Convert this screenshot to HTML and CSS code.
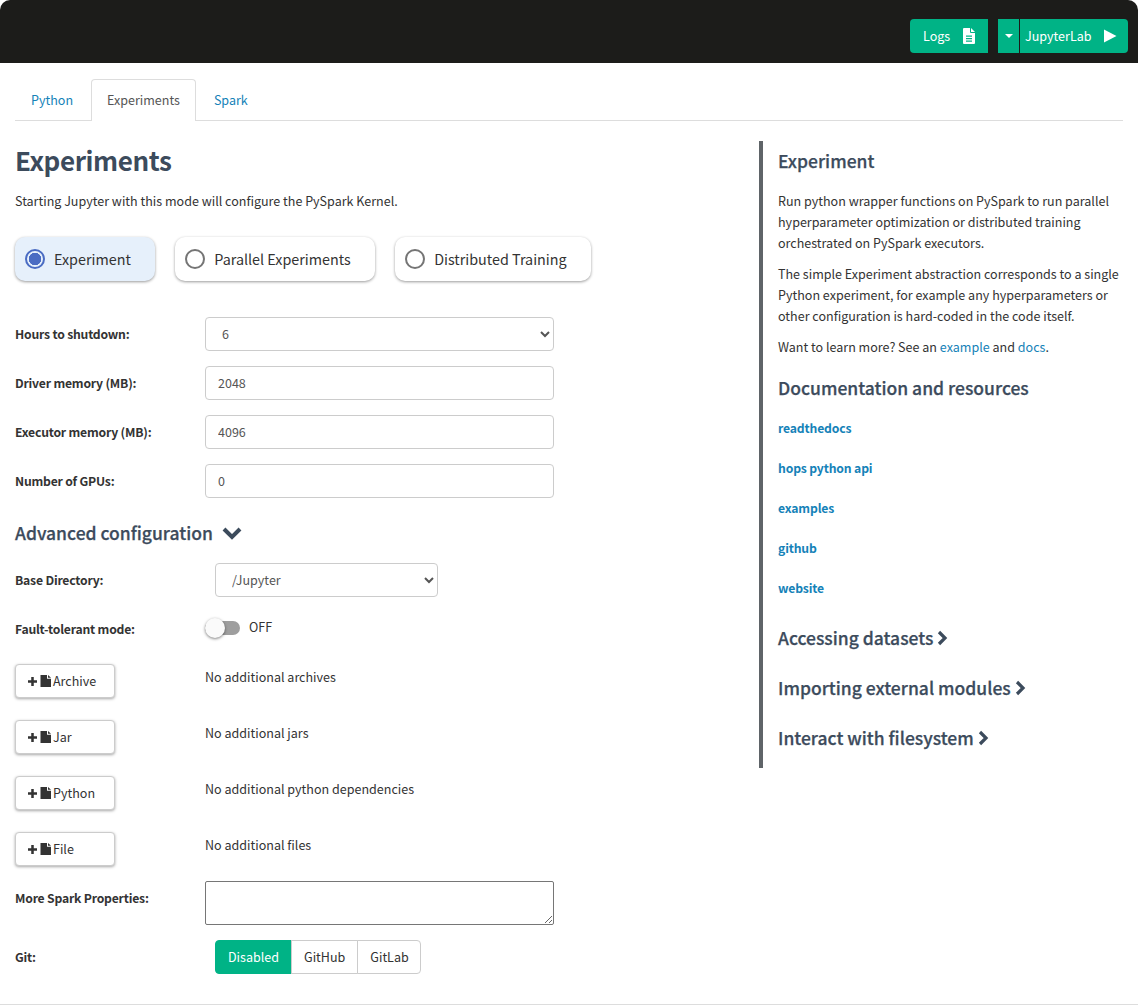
FILE: index.html
```html
<!DOCTYPE html>
<html lang="en">
  <head>
    <meta charset="UTF-8" />
    <title>Jupyter</title>
    <link rel="stylesheet" href="styles.css">
  </head>
  <body>
    <header class="topBar">
      <button class="greenBtn logsBtn">
        Logs
        <svg class="btnIcon" width="12" height="16" viewBox="0 0 12 16"><path fill="currentColor" fill-rule="evenodd" d="M0 1a1 1 0 0 1 1-1h6v4a1 1 0 0 0 1 1h4v10a1 1 0 0 1-1 1H1a1 1 0 0 1-1-1zM8 0l4 4H8zM3 7.5v1.2h6V7.5zM3 10v1.2h6V10zM3 12.5v1.2h6v-1.2z"/></svg>
      </button>
      <div class="splitBtn">
        <button class="greenBtn caretBtn"><span class="caret"></span></button>
        <button class="greenBtn startBtn">
          JupyterLab
          <svg class="btnIcon" width="13" height="14" viewBox="0 0 13 14"><path fill="currentColor" d="M0 0.5 12.5 7 0 13.5z"/></svg>
        </button>
      </div>
    </header>

    <main>
      <ul class="tabs">
        <li><a href="#">Python</a></li>
        <li class="active"><a href="#">Experiments</a></li>
        <li><a href="#">Spark</a></li>
      </ul>

      <div class="content">
        <section class="formCol">
          <h1>Experiments</h1>
          <p class="intro">Starting Jupyter with this mode will configure the PySpark Kernel.</p>

          <div class="modes">
            <label class="modeCard selected"><span class="radio"></span>Experiment</label>
            <label class="modeCard"><span class="radio"></span>Parallel Experiments</label>
            <label class="modeCard"><span class="radio"></span>Distributed Training</label>
          </div>

          <div class="fieldRow">
            <label>Hours to shutdown:</label>
            <select class="field"><option>6</option></select>
          </div>
          <div class="fieldRow">
            <label>Driver memory (MB):</label>
            <input class="field" type="text" value="2048" />
          </div>
          <div class="fieldRow">
            <label>Executor memory (MB):</label>
            <input class="field" type="text" value="4096" />
          </div>
          <div class="fieldRow">
            <label>Number of GPUs:</label>
            <input class="field" type="text" value="0" />
          </div>

          <h2 class="advanced">
            Advanced configuration
            <svg width="20" height="14" viewBox="0 0 20 14"><path fill="none" stroke="currentColor" stroke-width="4" d="M2 3l8 8 8-8"/></svg>
          </h2>

          <div class="fieldRow baseDir">
            <label>Base Directory:</label>
            <select class="field"><option>/Jupyter</option></select>
          </div>
          <div class="fieldRow toggleRow">
            <label>Fault-tolerant mode:</label>
            <span class="toggle"><span class="knob"></span></span>
            <span class="toggleText">OFF</span>
          </div>

          <div class="fileRow">
            <button class="addBtn"><svg class="plusIcon" width="9" height="9" viewBox="0 0 10 10"><path fill="currentColor" d="M3.6 0h2.8v3.6H10v2.8H6.4V10H3.6V6.4H0V3.6h3.6z"/></svg><svg width="11" height="12" viewBox="0 0 11 12"><path fill="currentColor" d="M0.500 0H7v3.800h4V12H0.500zM8 0l3 2.800H8z"/></svg>Archive</button>
            <span>No additional archives</span>
          </div>
          <div class="fileRow">
            <button class="addBtn"><svg class="plusIcon" width="9" height="9" viewBox="0 0 10 10"><path fill="currentColor" d="M3.6 0h2.8v3.6H10v2.8H6.4V10H3.6V6.4H0V3.6h3.6z"/></svg><svg width="11" height="12" viewBox="0 0 11 12"><path fill="currentColor" d="M0.500 0H7v3.800h4V12H0.500zM8 0l3 2.800H8z"/></svg>Jar</button>
            <span>No additional jars</span>
          </div>
          <div class="fileRow">
            <button class="addBtn"><svg class="plusIcon" width="9" height="9" viewBox="0 0 10 10"><path fill="currentColor" d="M3.6 0h2.8v3.6H10v2.8H6.4V10H3.6V6.4H0V3.6h3.6z"/></svg><svg width="11" height="12" viewBox="0 0 11 12"><path fill="currentColor" d="M0.500 0H7v3.800h4V12H0.500zM8 0l3 2.800H8z"/></svg>Python</button>
            <span>No additional python dependencies</span>
          </div>
          <div class="fileRow">
            <button class="addBtn"><svg class="plusIcon" width="9" height="9" viewBox="0 0 10 10"><path fill="currentColor" d="M3.6 0h2.8v3.6H10v2.8H6.4V10H3.6V6.4H0V3.6h3.6z"/></svg><svg width="11" height="12" viewBox="0 0 11 12"><path fill="currentColor" d="M0.500 0H7v3.800h4V12H0.500zM8 0l3 2.800H8z"/></svg>File</button>
            <span>No additional files</span>
          </div>

          <div class="fieldRow sparkRow">
            <label>More Spark Properties:</label>
            <textarea class="sparkProps"></textarea>
          </div>
          <div class="fieldRow gitRow">
            <label>Git:</label>
            <div class="btnGroup">
              <button class="on">Disabled</button>
              <button>GitHub</button>
              <button>GitLab</button>
            </div>
          </div>
        </section>

        <aside class="help">
          <h3>Experiment</h3>
          <p>Run python wrapper functions on PySpark to run parallel hyperparameter optimization or distributed training orchestrated on PySpark executors.</p>
          <p>The simple Experiment abstraction corresponds to a single Python experiment, for example any hyperparameters or other configuration is hard-coded in the code itself.</p>
          <p>Want to learn more? See an <a href="#">example</a> and <a href="#">docs</a>.</p>

          <h2>Documentation and resources</h2>
          <a class="resLink" href="#">readthedocs</a>
          <a class="resLink" href="#">hops python api</a>
          <a class="resLink" href="#">examples</a>
          <a class="resLink" href="#">github</a>
          <a class="resLink" href="#">website</a>

          <h2 class="more">Accessing datasets <svg width="11" height="16" viewBox="0 0 11 16"><path fill="none" stroke="currentColor" stroke-width="3.200" d="M2 2l6 6-6 6"/></svg></h2>
          <h2 class="more">Importing external modules <svg width="11" height="16" viewBox="0 0 11 16"><path fill="none" stroke="currentColor" stroke-width="3.200" d="M2 2l6 6-6 6"/></svg></h2>
          <h2 class="more">Interact with filesystem <svg width="11" height="16" viewBox="0 0 11 16"><path fill="none" stroke="currentColor" stroke-width="3.200" d="M2 2l6 6-6 6"/></svg></h2>
        </aside>
      </div>
    </main>
    <div class="bottomLine"></div>
  </body>
</html>
```

FILE: styles.css
```css
:root {
  --green: #00b386;
  --heading: #3c4b5c;
  --text: #333333;
  --link: #1582b8;
}

* {
  box-sizing: border-box;
}

html,
body {
  margin: 0;
  padding: 0;
}

body {
  height: 1005px;
  overflow: hidden;
  background: #ffffff;
  color: var(--text);
  font-family: "Noto Sans CJK SC", "Open Sans", sans-serif;
  font-size: 12.54px;
  line-height: 20px;
}

button,
input,
select,
textarea {
  font-family: inherit;
}

a {
  color: var(--link);
  text-decoration: none;
}

/* top bar */
.topBar {
  height: 63px;
  background: #1c1c1a;
  border-radius: 10px 10px 0 0;
  display: flex;
  align-items: flex-start;
  justify-content: flex-end;
  gap: 10px;
  padding: 19px 10px 0 0;
}

.greenBtn {
  height: 34px;
  border: none;
  background: var(--green);
  color: #ffffff;
  font-size: 12.54px;
  display: flex;
  align-items: center;
}

.logsBtn {
  width: 78px;
  padding: 0 13px 2px;
  justify-content: space-between;
  border-radius: 4px 0 0 4px;
}

.btnIcon {
  margin-top: 2px;
}

.splitBtn {
  display: flex;
  gap: 1px;
}

.caretBtn {
  width: 21px;
  justify-content: center;
  padding: 0;
}

.caret {
  border-top: 4px solid #ffffff;
  border-left: 4px solid transparent;
  border-right: 4px solid transparent;
}

.startBtn {
  width: 108px;
  padding: 0 11px 2px 5px;
  justify-content: space-between;
  border-radius: 0 4px 4px 0;
}

/* tabs */
main {
  padding: 16px 15px 0;
}

.tabs {
  list-style: none;
  margin: 0;
  padding: 0;
  display: flex;
  height: 42px;
  border-bottom: 1px solid #dddddd;
}

.tabs li a {
  display: block;
  height: 42px;
  padding: 10px 15px 0;
  border: 1px solid transparent;
  border-bottom: none;
  border-radius: 4px 4px 0 0;
}

.tabs li {
  margin-right: 2px;
}

.tabs li.active a {
  color: #555555;
  background: #ffffff;
  border-color: #dddddd;
}

.content {
  display: flex;
}

.formCol {
  width: 744px;
  flex: none;
}

h1 {
  margin: 18px 0 0;
  color: var(--heading);
  font-size: 26px;
  line-height: 42px;
  font-weight: 700;
  letter-spacing: -0.4px;
}

.intro {
  margin: 10px 0 0;
}

/* mode cards */
.modes {
  display: flex;
  gap: 20px;
  margin-top: 26px;
}

.modeCard {
  height: 44px;
  padding: 0 24.4px 0 10px;
  display: flex;
  align-items: center;
  gap: 9px;
  font-size: 14.35px;
  border-radius: 10px;
  background: #ffffff;
  box-shadow: 0 1px 3px rgba(0, 0, 0, 0.4);
}

.modeCard.selected {
  background: #e6f0fb;
}

.radio {
  width: 20px;
  height: 20px;
  border: 2px solid #757575;
  border-radius: 50%;
  background: #ffffff;
}

.selected .radio {
  border-color: #4a6cc3;
  background: radial-gradient(circle, #4a6cc3 0 6px, #e6f0fb 6.500px);
}

/* form rows */
.fieldRow {
  display: flex;
  align-items: center;
  height: 34px;
  margin-top: 15px;
}

.modes + .fieldRow {
  margin-top: 36px;
}

.fieldRow label {
  width: 190px;
  flex: none;
  font-size: 12.2px;
  font-weight: 700;
  letter-spacing: -0.2px;
}

.field {
  width: 349px;
  height: 34px;
  padding: 0 12px 2px;
  font-size: 12.54px;
  color: #555555;
  background: #ffffff;
  border: 1px solid #cccccc;
  border-radius: 4px;
}

.advanced {
  margin: 17px 0 0;
  display: flex;
  align-items: center;
  gap: 9px;
  color: var(--heading);
  font-size: 17.5px;
  line-height: 36px;
  font-weight: 500;
  -webkit-text-stroke: 0.25px;
}

.baseDir {
  margin-top: 12px;
}

.baseDir .field {
  width: 223px;
  margin-left: 10px;
}

.toggleRow {
  margin-top: 16px;
  height: 30px;
}

.toggleRow label {
  padding-top: 2px;
}

.toggle {
  position: relative;
  width: 35px;
  height: 14px;
  background: #9e9e9e;
  border-radius: 7px;
}

.knob {
  position: absolute;
  left: 0;
  top: -3px;
  width: 20px;
  height: 20px;
  border-radius: 50%;
  background: #fafafa;
  box-shadow: 0 1px 3px rgba(0, 0, 0, 0.5);
}

.toggleText {
  margin-left: 9px;
  margin-top: -3px;
}

.fileRow {
  display: flex;
  height: 34px;
  margin-top: 22px;
}

.toggleRow + .fileRow {
  margin-top: 21px;
}

.fileRow span {
  margin-left: 90px;
  margin-top: 3px;
}

.addBtn {
  width: 100px;
  height: 34px;
  padding: 0 0 2px 12px;
  display: flex;
  align-items: center;
  gap: 2px;
  color: #333333;
  font-size: 12.54px;
  background: #ffffff;
  border: 1px solid #cccccc;
  border-radius: 4px;
  box-shadow: 0 1px 3px rgba(0, 0, 0, 0.35);
}

.addBtn svg {
  margin-top: 2px;
}

.addBtn .plusIcon {
  margin-right: 1px;
}

.sparkRow {
  margin-top: 15px;
  height: 44px;
  align-items: flex-start;
}

.sparkRow label {
  margin-top: 7px;
}

.sparkProps {
  width: 349px;
  height: 44px;
  border: 1px solid #767676;
  border-radius: 2px;
}

.gitRow {
  margin-top: 15px;
  height: 34px;
}

.btnGroup {
  display: flex;
  margin-left: 10px;
}

.btnGroup button {
  height: 34px;
  padding: 0 12px 2px;
  margin-left: -1px;
  font-size: 12.54px;
  color: #333333;
  background: #ffffff;
  border: 1px solid #cccccc;
}

.btnGroup button:first-child {
  margin-left: 0;
  border-radius: 4px 0 0 4px;
}

.btnGroup button:last-child {
  padding-right: 11.5px;
  border-radius: 0 4px 4px 0;
}

.btnGroup button.on {
  color: #ffffff;
  background: var(--green);
  border-color: var(--green);
}

/* help panel */
.help {
  width: 364px;
  height: 627px;
  margin-top: 20px;
  padding-left: 15px;
  border-left: 4px solid #5f6468;
}

.help h3 {
  margin: 6px 0 0;
  color: var(--heading);
  font-size: 17.5px;
  line-height: 28px;
  font-weight: 500;
  -webkit-text-stroke: 0.25px;
}

.help p {
  margin: 0 0 10px;
  line-height: 21px;
}

.help h3 + p {
  margin-top: 15px;
}

.help h2 {
  margin: 17px 0 0;
  color: var(--heading);
  font-size: 17.5px;
  line-height: 28px;
  font-weight: 500;
  -webkit-text-stroke: 0.25px;
}

.resLink {
  display: block;
  margin-top: 20px;
  font-size: 12.2px;
  font-weight: 700;
  letter-spacing: -0.15px;
}

.help h2 + .resLink {
  margin-top: 16px;
}

.help h2.more {
  margin-top: 22px;
  display: flex;
  align-items: center;
  gap: 4px;
}

.resLink + .more {
  margin-top: 26px !important;
}

.bottomLine {
  position: absolute;
  left: 0;
  right: 0;
  top: 1004px;
  height: 1px;
  background: #dddddd;
}
```
